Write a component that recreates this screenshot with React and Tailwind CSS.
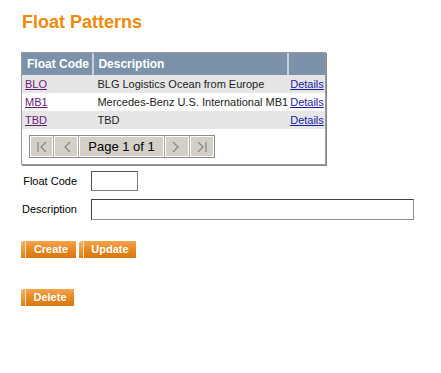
import React from 'react'

const rows = [
  { code: 'BLO', desc: 'BLG Logistics Ocean from Europe' },
  { code: 'MB1', desc: 'Mercedes-Benz U.S. International MB1' },
  { code: 'TBD', desc: 'TBD' },
]

const Chevron = ({ dir = 'left', bar = false }) => (
  <svg width="14" height="14" viewBox="0 0 14 14" fill="none" stroke="#8a8a8a" strokeWidth="1.3">
    {dir === 'left' ? (
      <>
        {bar && <line x1="3" y1="2" x2="3" y2="12" />}
        <polyline points="11,2 6,7 11,12" />
      </>
    ) : (
      <>
        <polyline points="3,2 8,7 3,12" />
        {bar && <line x1="11" y1="2" x2="11" y2="12" />}
      </>
    )}
  </svg>
)

const PagerBtn = ({ children, className = '' }) => (
  <div className={`flex h-[21px] items-center justify-center border border-white bg-[#d4d0c8] ${className}`}>
    {children}
  </div>
)

const OrangeButton = ({ label, width }) => (
  <div className="flex h-[17px]" style={{ width }}>
    <span className="w-[4px] rounded-tl-[3px] bg-gradient-to-b from-[#f6b25c] to-[#e07f16]" />
    <span className="w-px bg-[#fbe3c2]" />
    <span className="flex flex-1 items-center justify-center bg-gradient-to-b from-[#f3a44a] via-[#e8871f] to-[#d9770f] text-[11px] font-bold text-white">
      {label}
    </span>
  </div>
)

export default function App() {
  return (
    <div className="min-h-[373px] w-[441px] bg-white pl-[21px] pt-[11px] font-['Liberation_Sans',Arial,sans-serif] text-[11px] text-black">
      <h1 className="pl-px text-[18px] font-bold leading-[22px] text-[#f08a0c]">Float Patterns</h1>

      <div className="mt-[19px] w-[305px] border border-[#9a9a9a] shadow-[1px_1px_0_#888] pb-[6px]">
        <table className="w-full border-collapse whitespace-nowrap">
          <thead>
            <tr className="h-[22px] bg-[#7b92aa] text-left text-[12px] font-bold text-white">
              <th className="w-[72px] border-r-2 border-r-[#c8d0d8] pl-[5px] font-bold">Float Code</th>
              <th className="border-r-2 border-r-[#c8d0d8] pl-[4px] font-bold">Description</th>
              <th className="w-[37px]"></th>
            </tr>
          </thead>
          <tbody>
            {rows.map((r, i) => (
              <tr key={r.code} className={`h-[18px] ${i % 2 === 0 ? 'bg-[#e6e6e6]' : 'bg-white'}`}>
                <td className="pl-[3px]"><a className="text-[#6a1b7a] underline">{r.code}</a></td>
                <td className="pl-[4px] text-[#222]">{r.desc}</td>
                <td className="pl-[2px]"><a className="text-[#1a1aa8] underline">Details</a></td>
              </tr>
            ))}
          </tbody>
        </table>

        <div className="ml-[7px] mt-[6px] flex w-[186px] gap-px border border-[#8c8c8c] bg-[#a8a8a8]">
          <PagerBtn className="w-[23px]"><Chevron dir="left" bar /></PagerBtn>
          <PagerBtn className="w-[24px]"><Chevron dir="left" /></PagerBtn>
          <PagerBtn className="flex-1 text-[13px] text-black">Page 1 of 1</PagerBtn>
          <PagerBtn className="w-[24px]"><Chevron dir="right" /></PagerBtn>
          <PagerBtn className="w-[24px]"><Chevron dir="right" bar /></PagerBtn>
        </div>
      </div>

      <div className="mt-[6px] flex items-center">
        <label className="w-[56px] text-right">Float Code</label>
        <input className="ml-[14px] h-[20px] w-[47px] border border-[#808080] border-l-[#505050] border-t-[#505050] bg-white" />
      </div>
      <div className="mt-[8px] flex items-center">
        <label className="w-[56px] text-right">Description</label>
        <input className="ml-[14px] h-[21px] w-[323px] border border-[#909090] border-l-[#404040] border-t-[#404040] bg-white" />
      </div>

      <div className="mt-[21px] flex gap-[3px]">
        <OrangeButton label="Create" width={55} />
        <OrangeButton label="Update" width={57} />
      </div>
      <div className="mt-[31px] flex">
        <OrangeButton label="Delete" width={53} />
      </div>
    </div>
  )
}
